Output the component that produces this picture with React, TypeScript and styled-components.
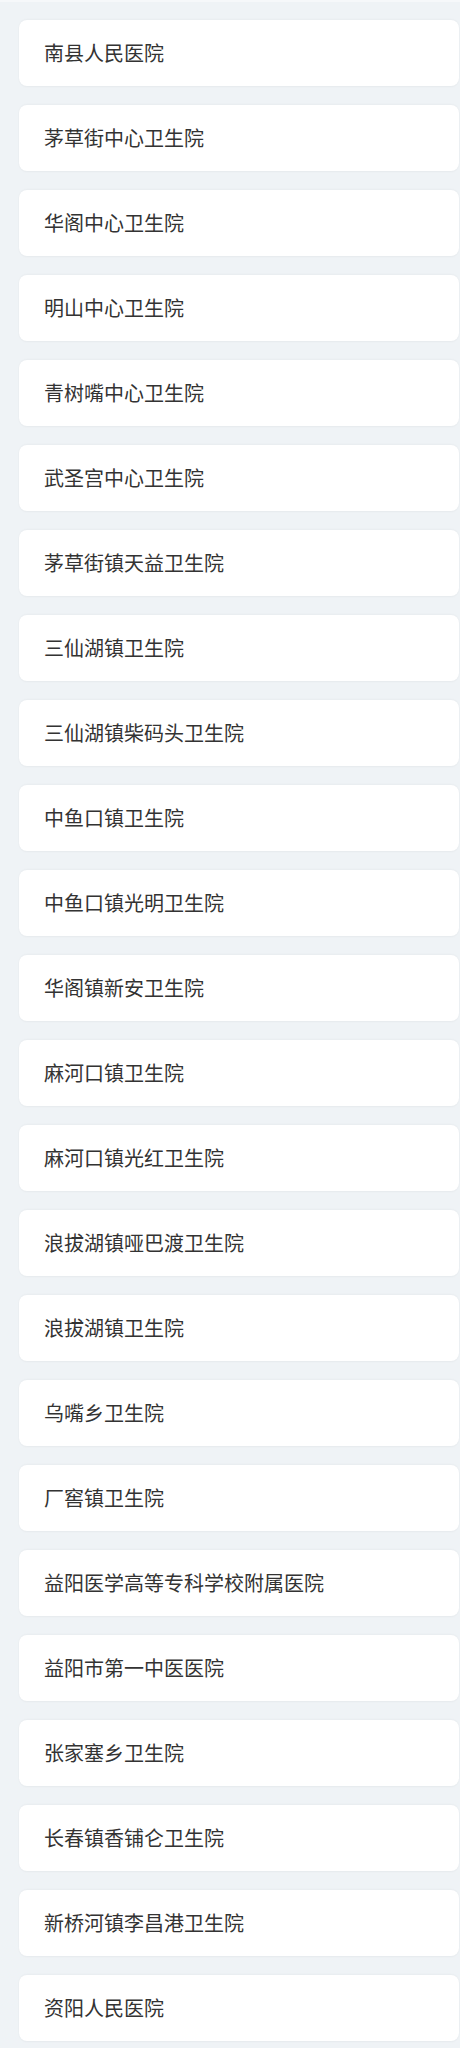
import * as React from "react";
import styled, { createGlobalStyle } from "styled-components";

const GlobalStyle = createGlobalStyle`
  html, body {
    margin: 0;
    padding: 0;
    background-color: #eff3f6;
  }
`;

const Page = styled.div`
  min-height: 2048px;
  box-sizing: border-box;
  padding: 20px 1px 0 19px;
  background-color: #eff3f6;
  box-shadow: inset 0 2px 0 #f6f8fa;
  display: flex;
  flex-direction: column;
  gap: 19px;
`;

const HospitalCard = styled.div`
  flex: 0 0 66px;
  height: 66px;
  box-sizing: border-box;
  display: flex;
  align-items: center;
  padding-left: 25px;
  background-color: #ffffff;
  border-radius: 8px;
  box-shadow: 0 -1px 2px rgba(0, 0, 0, 0.03), 0 1px 2px rgba(0, 0, 0, 0.04);
  color: #333333;
  font-size: 20px;
  line-height: 1;
  font-family: "Noto Sans CJK SC", "Noto Sans", sans-serif;
`;

const hospitals = [
  "南县人民医院",
  "茅草街中心卫生院",
  "华阁中心卫生院",
  "明山中心卫生院",
  "青树嘴中心卫生院",
  "武圣宫中心卫生院",
  "茅草街镇天益卫生院",
  "三仙湖镇卫生院",
  "三仙湖镇柴码头卫生院",
  "中鱼口镇卫生院",
  "中鱼口镇光明卫生院",
  "华阁镇新安卫生院",
  "麻河口镇卫生院",
  "麻河口镇光红卫生院",
  "浪拔湖镇哑巴渡卫生院",
  "浪拔湖镇卫生院",
  "乌嘴乡卫生院",
  "厂窖镇卫生院",
  "益阳医学高等专科学校附属医院",
  "益阳市第一中医医院",
  "张家塞乡卫生院",
  "长春镇香铺仑卫生院",
  "新桥河镇李昌港卫生院",
  "资阳人民医院",
];

const App: React.FC = () => {
  return (
    <>
      <GlobalStyle />
      <Page>
        {hospitals.map((name) => (
          <HospitalCard key={name}>{name}</HospitalCard>
        ))}
      </Page>
    </>
  );
};

export default App;
